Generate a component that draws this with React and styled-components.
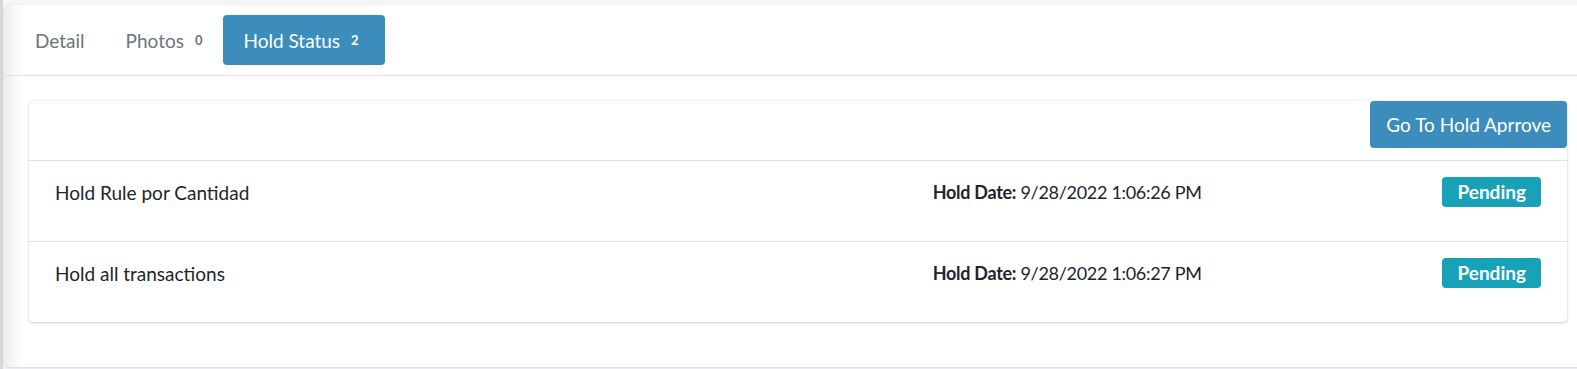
import React from 'react';
import styled, { createGlobalStyle } from 'styled-components';

const COLOR = {
  PAGE: '#f4f6f9',
  PRIMARY: '#3c8dbc',
  INFO: '#17a2b8',
  TEXT: '#212529',
  MUTED: '#6c757d',
  BORDER: '#dee2e6',
};

const GlobalStyle = createGlobalStyle`
  html, body {
    margin: 0;
    padding: 0;
    background: ${COLOR.PAGE};
    overflow: hidden;
  }
  body {
    font-family: Lato, "Source Sans Pro", "Liberation Sans", sans-serif;
    color: ${COLOR.TEXT};
  }
  * {
    box-sizing: border-box;
  }
`;

const Page = styled.div`
  padding: 5px 0 0 4px;
  height: 369px;
  background: linear-gradient(to right, #d6d7d9 0, #d6d7d9 3px, ${COLOR.PAGE} 3px);
`;

const OuterCard = styled.div`
  margin-right: -15px;
  background: linear-gradient(to right, #ececec 0, #fafafa 12px, #ffffff 22px);
  border-radius: 5px;
  box-shadow: 0 0 1px rgba(0, 0, 0, 0.15), 0 1px 3px rgba(0, 0, 0, 0.12);
`;

const TabHeader = styled.div`
  display: flex;
  align-items: center;
  gap: 1px;
  padding: 10px 11px;
  border-bottom: 1px solid ${COLOR.BORDER};
`;

const Tab = styled.div`
  display: flex;
  align-items: center;
  height: 50px;
  padding: 0 20px;
  border-radius: 4px;
  font-size: 19px;
  background: ${({ $active }) => ($active ? COLOR.PRIMARY : 'transparent')};
  color: ${({ $active }) => ($active ? '#ffffff' : COLOR.MUTED)};
`;

const TabCount = styled.span`
  margin-left: 11px;
  padding-right: ${({ $active }) => ($active ? '6px' : '0')};
  font-size: 13px;
  font-weight: 700;
  color: ${({ $active }) => ($active ? '#ffffff' : COLOR.MUTED)};
`;

const Body = styled.div`
  padding: 25px 25px 45px;
`;

const HoldCard = styled.div`
  background: #ffffff;
  border-radius: 4px;
  box-shadow: 0 0 1px rgba(0, 0, 0, 0.2), 0 1px 3px rgba(0, 0, 0, 0.18);
`;

const HoldHeader = styled.div`
  display: flex;
  justify-content: flex-end;
  padding-bottom: 12px;
  border-bottom: 1px solid ${COLOR.BORDER};
`;

const ApproveButton = styled.button`
  height: 47px;
  padding: 0 16px;
  border: none;
  border-radius: 4px;
  background: ${COLOR.PRIMARY};
  color: #ffffff;
  font-family: inherit;
  font-size: 19px;
`;

const HoldItem = styled.div`
  height: ${({ $last }) => ($last ? '80px' : '81px')};
  padding: 16px 26px 0;
  font-size: 19px;
  border-bottom: ${({ $last }) => ($last ? 'none' : `1px solid ${COLOR.BORDER}`)};
`;

const Row = styled.div`
  display: flex;
  align-items: center;
  height: 30px;
  margin: 0 -9.375px;
`;

const Col = styled.div`
  flex: 0 0 ${({ $span }) => (($span / 12) * 100).toFixed(4)}%;
  padding: 0 9.375px;
  text-align: ${({ $right }) => ($right ? 'right' : 'left')};
  white-space: nowrap;
`;

const DateCol = styled(Col)`
  font-size: 18px;
  letter-spacing: -0.3px;
`;

const Label = styled.b`
  font-weight: 700;
`;

const StatusBadge = styled.span`
  display: inline-block;
  height: 30px;
  line-height: 30px;
  padding: 0 15px;
  border-radius: 4px;
  background: ${COLOR.INFO};
  color: #ffffff;
  font-size: 19px;
  font-weight: 700;
`;

const holds = [
  { name: 'Hold Rule por Cantidad', date: '9/28/2022 1:06:26 PM', status: 'Pending' },
  { name: 'Hold all transactions', date: '9/28/2022 1:06:27 PM', status: 'Pending' },
];

function App() {
  return (
    <>
      <GlobalStyle />
      <Page>
        <OuterCard>
          <TabHeader>
            <Tab>Detail</Tab>
            <Tab>
              Photos
              <TabCount>0</TabCount>
            </Tab>
            <Tab $active>
              Hold Status
              <TabCount $active>2</TabCount>
            </Tab>
          </TabHeader>
          <Body>
            <HoldCard>
              <HoldHeader>
                <ApproveButton>Go To Hold Aprrove</ApproveButton>
              </HoldHeader>
              {holds.map((hold, i) => (
                <HoldItem key={hold.date} $last={i === holds.length - 1}>
                  <Row>
                    <Col $span={7}>{hold.name}</Col>
                    <DateCol $span={4}>
                      <Label>Hold Date:</Label> {hold.date}
                    </DateCol>
                    <Col $span={1} $right>
                      <StatusBadge>{hold.status}</StatusBadge>
                    </Col>
                  </Row>
                </HoldItem>
              ))}
            </HoldCard>
          </Body>
        </OuterCard>
      </Page>
    </>
  );
}

export default App;
